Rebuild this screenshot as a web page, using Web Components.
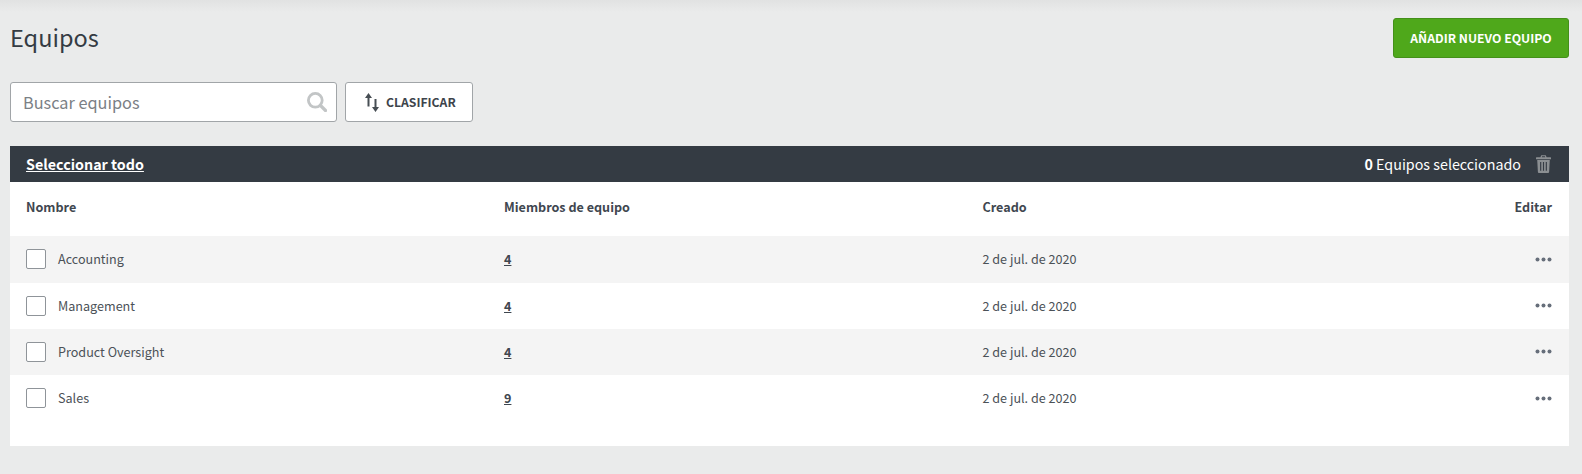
<!DOCTYPE html>
<html lang="es"><head><meta charset="utf-8"><title>Equipos</title>
<style>
html,body{margin:0;padding:0}
body{background:linear-gradient(#e1e2e2,#eaebeb 12px) #eaebeb;background-repeat:no-repeat;background-size:100% 14px;font-family:"Noto Sans CJK JP","Liberation Sans",sans-serif;color:#343b43;height:474px;overflow:hidden}
</style></head><body>
<template id="t-page"><style>
:host{display:block;padding:18px 13px 0 10px}
.head{display:flex;justify-content:space-between;align-items:flex-start;height:64px}
h1{margin:0;font-weight:400;font-size:23.5px;line-height:38px;color:#343b43}
.tools{display:flex;gap:8px;height:40px;margin-bottom:24px}
</style><div class="head"><h1><slot name="title"></slot></h1><slot name="action"></slot></div>
<div class="tools"><slot name="tools"></slot></div><slot></slot></template>

<template id="t-btn"><style>
:host{display:inline-flex;align-items:center;justify-content:center;box-sizing:border-box;height:40px;border-radius:3px;border:1px solid #a1a5a8;background:#fff;color:#3d444b;font-size:12.2px;font-weight:700;line-height:20px;white-space:nowrap;gap:7px;padding:0 16px 0 19px}
:host([primary]){background:#4fa81b;border-color:#44901a;color:#fff;width:176px;padding:0}
</style><slot name="icon"></slot><slot></slot></template>

<template id="t-search"><style>
:host{display:flex;align-items:center;justify-content:space-between;box-sizing:border-box;width:327px;height:40px;background:#fff;border:1px solid #a1a5a8;border-radius:3px;padding:0 9px 0 12px;font-size:16.300px;line-height:24px;color:#7b8085}
svg{display:block}
</style><span><slot></slot></span><svg width="20" height="20" viewBox="0 0 20 20" fill="none" stroke="#c2c5c6"><circle cx="8.300" cy="8.300" r="6.900" stroke-width="2.800"/><path d="M13.500 13.500l5 5" stroke-width="3.200" stroke-linecap="round"/></svg></template>

<template id="t-bar"><style>
:host{display:flex;align-items:center;justify-content:space-between;height:36px;background:#343b43;color:#fff;padding:0 18px 0 16px;font-size:14.300px;line-height:24px}
.all{font-weight:700;text-decoration:underline}
.r{display:flex;align-items:center;gap:15px}
svg{display:block}
</style><span class="all"><slot name="all"></slot></span><span class="r"><span><slot></slot></span>
<svg width="15" height="18" viewBox="0 0 16 19" preserveAspectRatio="none"><path fill="#8b8f92" d="M5.6.3h4.8l.9 2.1H15.400c.4 0 .6.3.6.6v1.400H0V3c0-.3.200-.6.6-.6h4.100zM6.500 1.300l-.4 1.100h3.800l-.4-1.100zM1.300 5.300h13.400l-.7 12.300c0 .8-.6 1.400-1.400 1.400H3.400c-.8 0-1.400-.6-1.400-1.400z"/><path stroke="#343b43" stroke-width="1.200" d="M5 7.500v9M8 7.500v9M11 7.500v9"/></svg></span></template>

<template id="t-panel"><style>
:host{display:block;background:#fff;height:264px}
.h{display:grid;grid-template-columns:478px 478.500px 1fr auto;padding:15px 17px 0 16px;height:54.400px;align-items:start;font-size:12.600px;font-weight:700;line-height:20px;box-sizing:border-box;color:#3f4750}
</style><div class="h"><slot name="h1"></slot><slot name="h2"></slot><slot name="h3"></slot><slot name="h4"></slot></div><slot></slot></template>

<template id="t-row"><style>
:host{display:grid;grid-template-columns:478px 478.500px 1fr auto;align-items:center;box-sizing:border-box;height:46.330px;padding:0 17px .6px 16px;font-size:12.600px;line-height:20px;color:#4b5157}
:host(:nth-of-type(odd)){background:#f4f4f4}
.n{display:flex;align-items:center;gap:12px}
.c{box-sizing:border-box;width:20px;height:20px;background:#fff;border:1px solid #8f9499;border-radius:2px}
.m{font-weight:700;text-decoration:underline;color:#3f4750}
svg{display:block}
</style><div class="n"><span class="c"></span><span><slot name="name"></slot></span></div>
<span class="m"><slot name="count"></slot></span><span><slot name="date"></slot></span>
<svg width="17" height="5" viewBox="0 0 17 5" fill="#666e7a"><circle cx="2.500" cy="2.500" r="2"/><circle cx="8.500" cy="2.500" r="2"/><circle cx="14.500" cy="2.500" r="2"/></svg></template>

<eq-page>
<span slot="title">Equipos</span>
<eq-btn slot="action" primary>AÑADIR NUEVO EQUIPO</eq-btn>
<eq-search slot="tools">Buscar equipos</eq-search>
<eq-btn slot="tools"><svg slot="icon" width="14" height="19" viewBox="0 0 14 19" fill="#474e54" style="display:block"><path d="M3.500 0L7 5H4.500v8.500h-2V5H0zM9.500 6h2v8H14l-3.500 5L7 14h2.500z"/></svg>CLASIFICAR</eq-btn>
<eq-bar><span slot="all">Seleccionar todo</span><b style="font-weight:700">0</b> Equipos seleccionado</eq-bar>
<eq-panel>
<span slot="h1">Nombre</span><span slot="h2">Miembros de equipo</span><span slot="h3">Creado</span><span slot="h4">Editar</span>
<eq-row><span slot="name">Accounting</span><span slot="count">4</span><span slot="date">2 de jul. de 2020</span></eq-row>
<eq-row><span slot="name">Management</span><span slot="count">4</span><span slot="date">2 de jul. de 2020</span></eq-row>
<eq-row><span slot="name">Product Oversight</span><span slot="count">4</span><span slot="date">2 de jul. de 2020</span></eq-row>
<eq-row><span slot="name">Sales</span><span slot="count">9</span><span slot="date">2 de jul. de 2020</span></eq-row>
</eq-panel>
</eq-page>
<script>
for (const [tag,id] of [['eq-page','t-page'],['eq-btn','t-btn'],['eq-search','t-search'],['eq-bar','t-bar'],['eq-panel','t-panel'],['eq-row','t-row']]) {
  customElements.define(tag, class extends HTMLElement {
    constructor(){super();this.attachShadow({mode:'open'}).appendChild(document.getElementById(id).content.cloneNode(true));}
  });
}
</script>
</body></html>
